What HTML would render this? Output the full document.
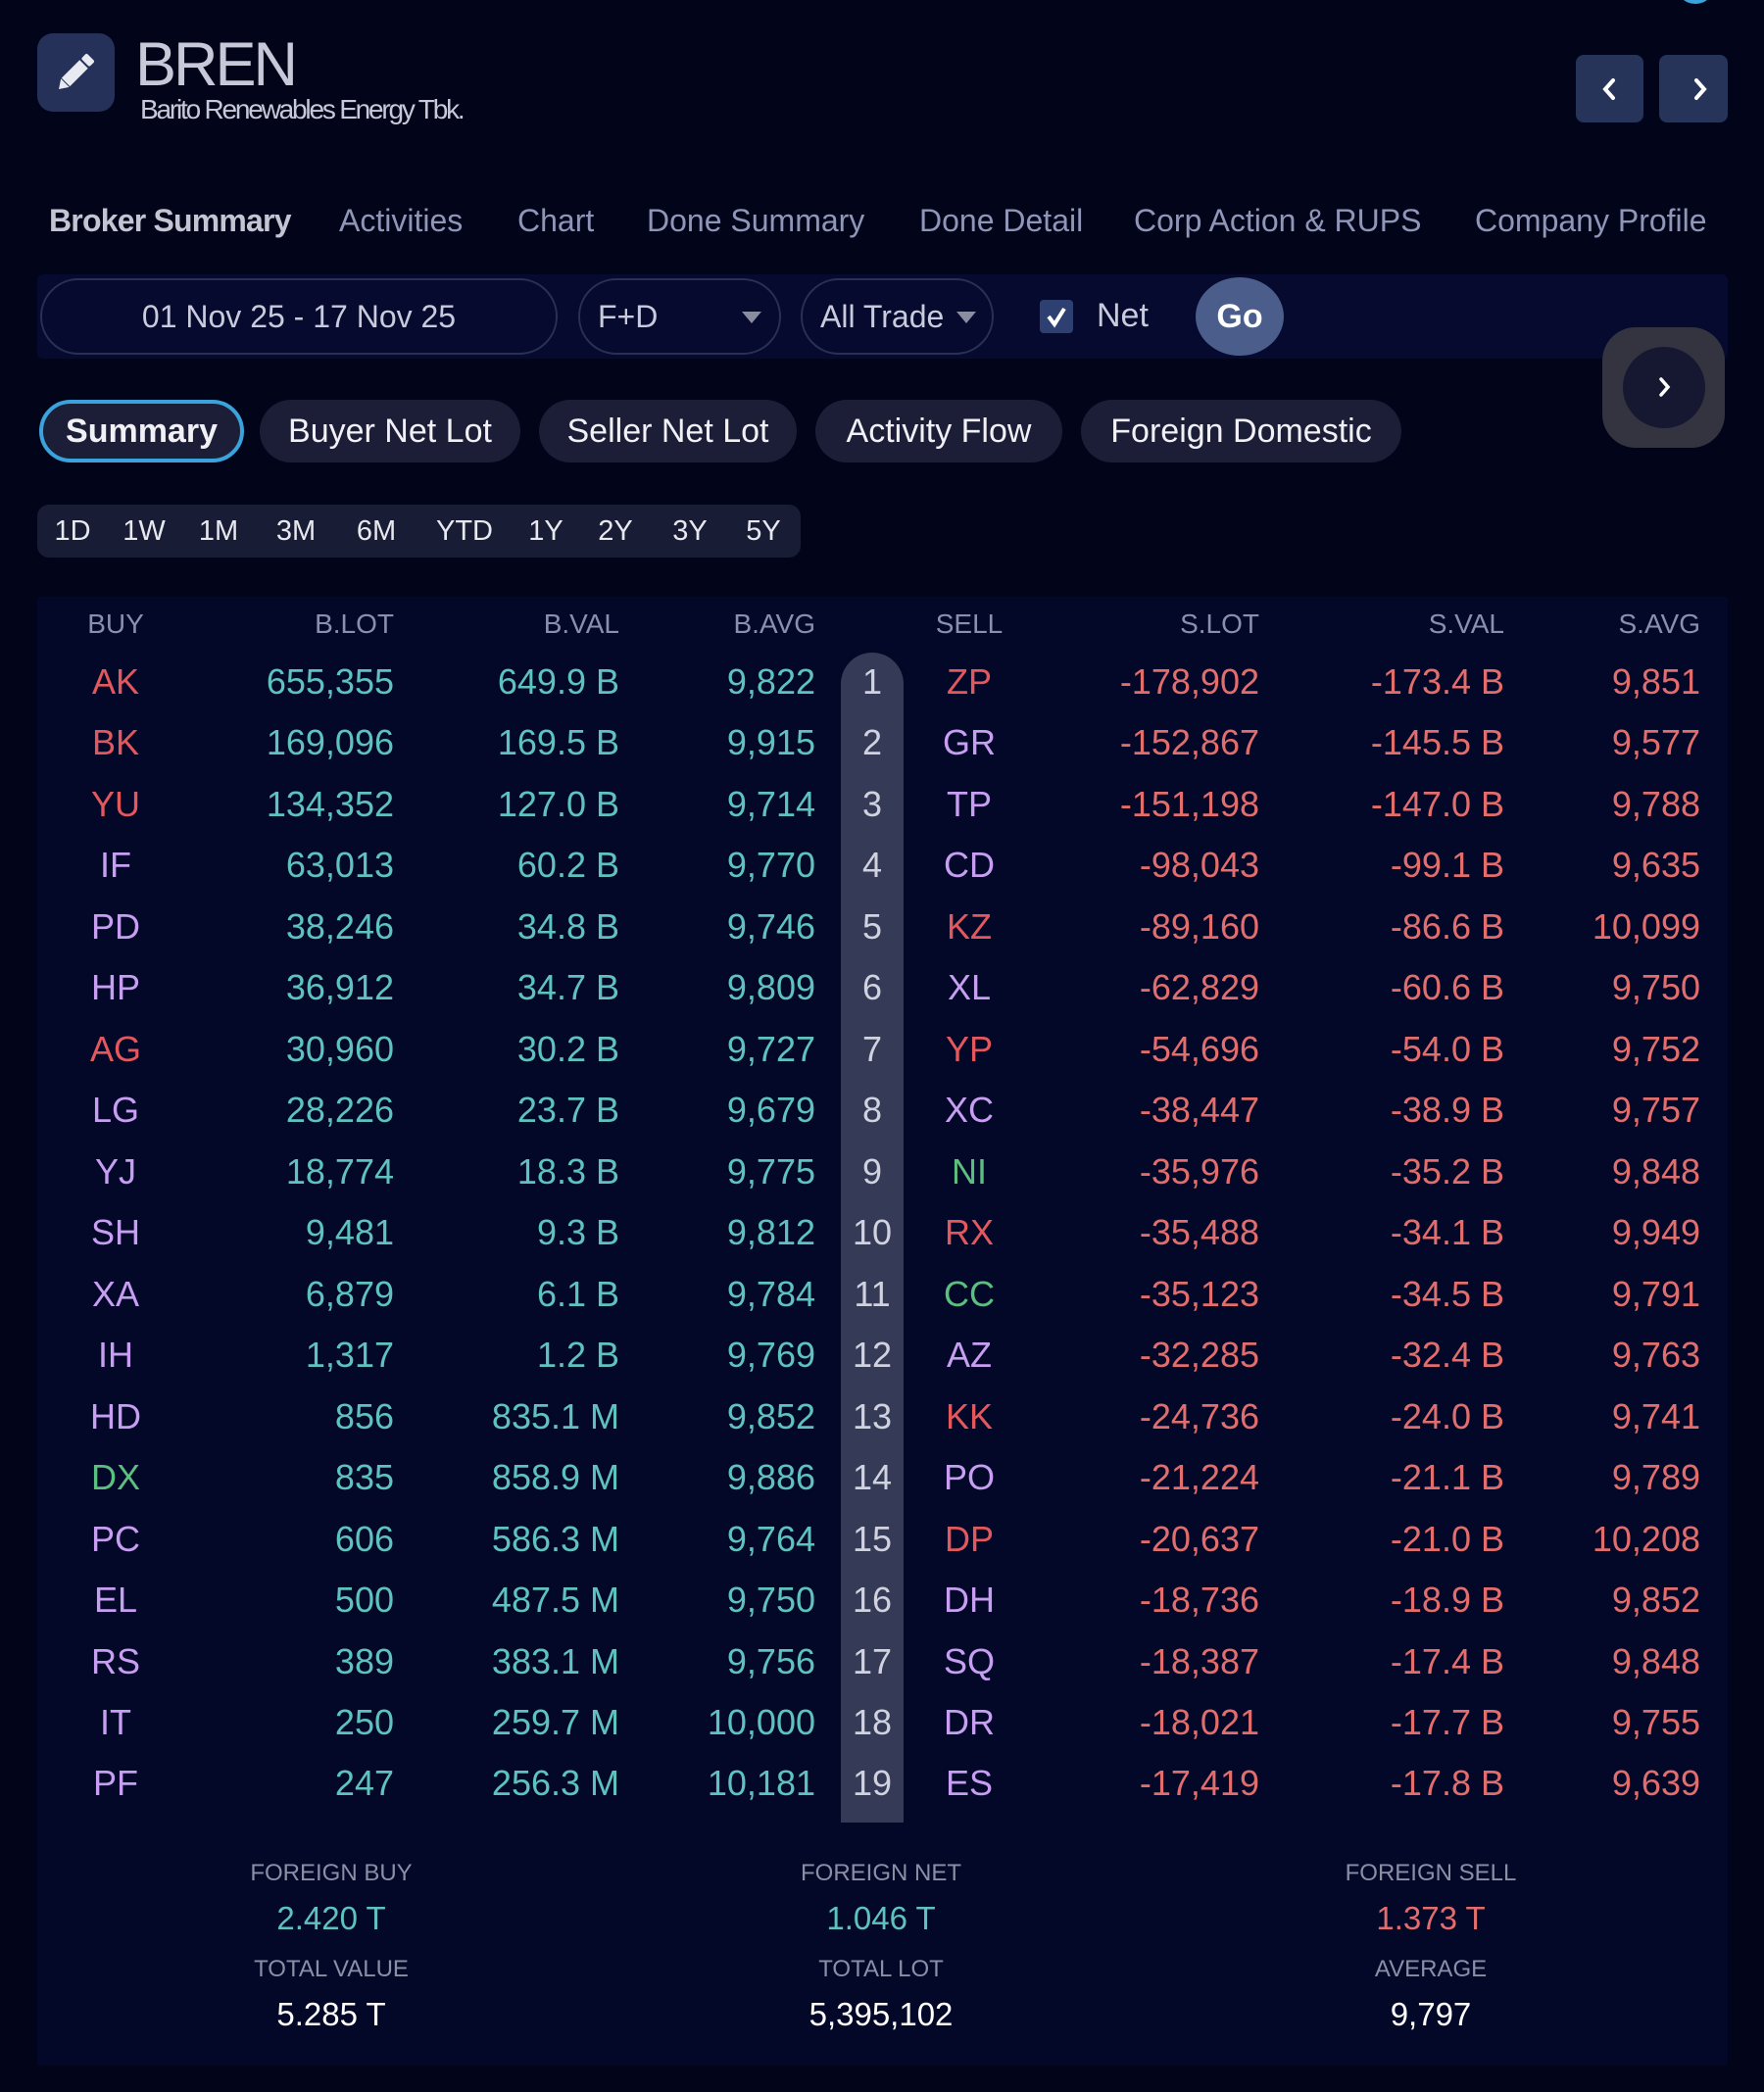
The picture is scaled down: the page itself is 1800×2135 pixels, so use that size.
<!DOCTYPE html>
<html><head><meta charset="utf-8"><style>
*{margin:0;padding:0;box-sizing:border-box}
body{width:1800px;height:2135px;background:#02041a;font-family:"Liberation Sans",sans-serif;position:relative;overflow:hidden;color:#c8c9d8}
.abs{position:absolute}
.tab{position:absolute;top:207px;font-size:32px;color:#9096b8;white-space:nowrap}
.pill{position:absolute;top:408px;height:64px;border-radius:32px;background:#1b1e36;color:#f0f0f5;font-size:34px;line-height:64px;text-align:center;white-space:nowrap}
.per{position:absolute;top:515px;height:54px;line-height:54px;font-size:29px;color:#e8e8f0;transform:translateX(-50%)}
.hd{position:absolute;top:620px;font-size:28px;color:#8a8fad;line-height:34px}
.row{position:absolute;left:0;width:1800px;height:62px;line-height:62px;font-size:36px}
.row div{position:absolute;top:0;white-space:nowrap}
.a{left:58px;width:120px;text-align:center}
.b{right:1398px;color:#5ec3bf}.c{right:1168px;color:#5ec3bf}.d{right:968px;color:#5ec3bf}
.n{left:858px;width:64px;text-align:center;color:#d0d2e0}
.s{left:929px;width:120px;text-align:center}
.e{right:515px;color:#e26d6d}.f{right:265px;color:#e26d6d}.g{right:65px;color:#e26d6d}
.R{color:#e2585d}.P{color:#c79ef2}.G{color:#5bbf80}
.ft{position:absolute;width:400px;text-align:center;transform:translateX(-50%)}
.lb{font-size:24px;color:#8a8fa6}
.vl{font-size:33px}
</style></head><body>
<div class="abs" style="left:1710px;top:-36px;width:40px;height:40px;border-radius:50%;background:#3aa3dc"></div>
<!-- header -->
<div class="abs" style="left:38px;top:34px;width:79px;height:80px;border-radius:16px;background:#253158"></div>
<svg class="abs" style="left:38px;top:34px" width="79" height="80" viewBox="0 0 79 80"><g transform="rotate(45 39 40)"><rect x="33" y="18" width="12" height="8" rx="2" fill="#e8eaf2"/><rect x="33" y="28" width="12" height="26" fill="#e8eaf2"/><path d="M33 55 L45 55 L39 64 Z" fill="#e8eaf2"/></g></svg>
<div class="abs" style="left:138px;top:30px;font-size:63px;color:#c7c9d9;letter-spacing:-3px">BREN</div>
<div class="abs" style="left:143px;top:96px;font-size:28px;color:#c7c9d9;letter-spacing:-2.2px">Barito Renewables Energy Tbk.</div>
<div class="abs" style="left:1608px;top:56px;width:69px;height:69px;border-radius:8px;background:#253458"></div>
<div class="abs" style="left:1693px;top:56px;width:70px;height:69px;border-radius:8px;background:#253458"></div>
<svg class="abs" style="left:1608px;top:56px" width="160" height="69"><path d="M38 26 L30 35 L38 44" stroke="#fff" stroke-width="4" fill="none" stroke-linecap="round"/><path d="M123 26 L131 35 L123 44" stroke="#fff" stroke-width="4" fill="none" stroke-linecap="round"/></svg>
<!-- tabs -->
<div class="tab" style="left:50px;font-weight:bold;color:#c3c5d3;letter-spacing:-0.8px">Broker Summary</div>
<div class="tab" style="left:346px">Activities</div>
<div class="tab" style="left:528px">Chart</div>
<div class="tab" style="left:660px">Done Summary</div>
<div class="tab" style="left:938px">Done Detail</div>
<div class="tab" style="left:1157px">Corp Action &amp; RUPS</div>
<div class="tab" style="left:1505px">Company Profile</div>
<!-- filter bar -->
<div class="abs" style="left:38px;top:280px;width:1725px;height:86px;background:#050a2e;border-radius:6px"></div>
<div class="abs" style="left:41px;top:284px;width:528px;height:78px;border:2px solid #2a2f55;border-radius:39px;font-size:32px;line-height:74px;text-align:center;color:#c9cbdc">01 Nov 25 - 17 Nov 25</div>
<div class="abs" style="left:590px;top:284px;width:207px;height:78px;border:2px solid #2a2f55;border-radius:39px;font-size:32px;line-height:74px;padding-left:18px;color:#c9cbdc">F+D</div>
<div class="abs" style="left:757px;top:318px;width:0;height:0;border-left:10px solid transparent;border-right:10px solid transparent;border-top:12px solid #8a8ca0"></div>
<div class="abs" style="left:817px;top:284px;width:197px;height:78px;border:2px solid #2a2f55;border-radius:39px;font-size:32px;line-height:74px;padding-left:18px;color:#c9cbdc">All Trade</div>
<div class="abs" style="left:976px;top:318px;width:0;height:0;border-left:10px solid transparent;border-right:10px solid transparent;border-top:12px solid #8a8ca0"></div>
<div class="abs" style="left:1061px;top:306px;width:34px;height:34px;border-radius:4px;background:#2e4072"></div>
<svg class="abs" style="left:1061px;top:306px" width="34" height="34"><path d="M9 17 L15 25 L25 9" stroke="#fff" stroke-width="4" fill="none"/></svg>
<div class="abs" style="left:1119px;top:303px;font-size:34px;color:#c9cbdc">Net</div>
<div class="abs" style="left:1220px;top:283px;width:90px;height:80px;border-radius:45px/40px;background:#4b5d8a;font-size:34px;font-weight:bold;line-height:80px;text-align:center;color:#fff">Go</div>
<!-- floating -->
<div class="abs" style="left:1635px;top:334px;width:125px;height:123px;border-radius:34px;background:#33343f"></div>
<div class="abs" style="left:1656px;top:354px;width:84px;height:83px;border-radius:50%;background:#161832"></div>
<svg class="abs" style="left:1656px;top:354px" width="84" height="83"><path d="M39 33 L46 41 L39 49" stroke="#fff" stroke-width="3.5" fill="none" stroke-linecap="round"/></svg>
<!-- pills -->
<div class="pill" style="left:40px;width:209px;border:4px solid #3aa3dc;line-height:56px;font-weight:bold">Summary</div>
<div class="pill" style="left:265px;width:266px">Buyer Net Lot</div>
<div class="pill" style="left:550px;width:263px">Seller Net Lot</div>
<div class="pill" style="left:832px;width:252px">Activity Flow</div>
<div class="pill" style="left:1103px;width:327px">Foreign Domestic</div>
<!-- period -->
<div class="abs" style="left:38px;top:515px;width:779px;height:54px;border-radius:12px;background:#191c35"></div>
<div class="per" style="left:74px">1D</div><div class="per" style="left:147px">1W</div><div class="per" style="left:223px">1M</div><div class="per" style="left:302px">3M</div><div class="per" style="left:384px">6M</div><div class="per" style="left:474px">YTD</div><div class="per" style="left:557px">1Y</div><div class="per" style="left:628px">2Y</div><div class="per" style="left:704px">3Y</div><div class="per" style="left:779px">5Y</div>
<!-- table panel -->
<div class="abs" style="left:38px;top:609px;width:1725px;height:1499px;background:#040828;border-radius:4px"></div>
<div class="abs" style="left:858px;top:666px;width:64px;height:1194px;background:#353a56;border-radius:32px 32px 0 0"></div>
<div class="hd" style="left:58px;width:120px;text-align:center">BUY</div>
<div class="hd" style="right:1398px">B.LOT</div>
<div class="hd" style="right:1168px">B.VAL</div>
<div class="hd" style="right:968px">B.AVG</div>
<div class="hd" style="left:929px;width:120px;text-align:center">SELL</div>
<div class="hd" style="right:515px">S.LOT</div>
<div class="hd" style="right:265px">S.VAL</div>
<div class="hd" style="right:65px">S.AVG</div>

<div class="row" style="top:665px"><div class="a R">AK</div><div class="b">655,355</div><div class="c">649.9 B</div><div class="d">9,822</div><div class="n">1</div><div class="s R">ZP</div><div class="e">-178,902</div><div class="f">-173.4 B</div><div class="g">9,851</div></div>
<div class="row" style="top:727px"><div class="a R">BK</div><div class="b">169,096</div><div class="c">169.5 B</div><div class="d">9,915</div><div class="n">2</div><div class="s P">GR</div><div class="e">-152,867</div><div class="f">-145.5 B</div><div class="g">9,577</div></div>
<div class="row" style="top:790px"><div class="a R">YU</div><div class="b">134,352</div><div class="c">127.0 B</div><div class="d">9,714</div><div class="n">3</div><div class="s P">TP</div><div class="e">-151,198</div><div class="f">-147.0 B</div><div class="g">9,788</div></div>
<div class="row" style="top:852px"><div class="a P">IF</div><div class="b">63,013</div><div class="c">60.2 B</div><div class="d">9,770</div><div class="n">4</div><div class="s P">CD</div><div class="e">-98,043</div><div class="f">-99.1 B</div><div class="g">9,635</div></div>
<div class="row" style="top:915px"><div class="a P">PD</div><div class="b">38,246</div><div class="c">34.8 B</div><div class="d">9,746</div><div class="n">5</div><div class="s R">KZ</div><div class="e">-89,160</div><div class="f">-86.6 B</div><div class="g">10,099</div></div>
<div class="row" style="top:977px"><div class="a P">HP</div><div class="b">36,912</div><div class="c">34.7 B</div><div class="d">9,809</div><div class="n">6</div><div class="s P">XL</div><div class="e">-62,829</div><div class="f">-60.6 B</div><div class="g">9,750</div></div>
<div class="row" style="top:1040px"><div class="a R">AG</div><div class="b">30,960</div><div class="c">30.2 B</div><div class="d">9,727</div><div class="n">7</div><div class="s R">YP</div><div class="e">-54,696</div><div class="f">-54.0 B</div><div class="g">9,752</div></div>
<div class="row" style="top:1102px"><div class="a P">LG</div><div class="b">28,226</div><div class="c">23.7 B</div><div class="d">9,679</div><div class="n">8</div><div class="s P">XC</div><div class="e">-38,447</div><div class="f">-38.9 B</div><div class="g">9,757</div></div>
<div class="row" style="top:1165px"><div class="a P">YJ</div><div class="b">18,774</div><div class="c">18.3 B</div><div class="d">9,775</div><div class="n">9</div><div class="s G">NI</div><div class="e">-35,976</div><div class="f">-35.2 B</div><div class="g">9,848</div></div>
<div class="row" style="top:1227px"><div class="a P">SH</div><div class="b">9,481</div><div class="c">9.3 B</div><div class="d">9,812</div><div class="n">10</div><div class="s R">RX</div><div class="e">-35,488</div><div class="f">-34.1 B</div><div class="g">9,949</div></div>
<div class="row" style="top:1290px"><div class="a P">XA</div><div class="b">6,879</div><div class="c">6.1 B</div><div class="d">9,784</div><div class="n">11</div><div class="s G">CC</div><div class="e">-35,123</div><div class="f">-34.5 B</div><div class="g">9,791</div></div>
<div class="row" style="top:1352px"><div class="a P">IH</div><div class="b">1,317</div><div class="c">1.2 B</div><div class="d">9,769</div><div class="n">12</div><div class="s P">AZ</div><div class="e">-32,285</div><div class="f">-32.4 B</div><div class="g">9,763</div></div>
<div class="row" style="top:1415px"><div class="a P">HD</div><div class="b">856</div><div class="c">835.1 M</div><div class="d">9,852</div><div class="n">13</div><div class="s R">KK</div><div class="e">-24,736</div><div class="f">-24.0 B</div><div class="g">9,741</div></div>
<div class="row" style="top:1477px"><div class="a G">DX</div><div class="b">835</div><div class="c">858.9 M</div><div class="d">9,886</div><div class="n">14</div><div class="s P">PO</div><div class="e">-21,224</div><div class="f">-21.1 B</div><div class="g">9,789</div></div>
<div class="row" style="top:1540px"><div class="a P">PC</div><div class="b">606</div><div class="c">586.3 M</div><div class="d">9,764</div><div class="n">15</div><div class="s R">DP</div><div class="e">-20,637</div><div class="f">-21.0 B</div><div class="g">10,208</div></div>
<div class="row" style="top:1602px"><div class="a P">EL</div><div class="b">500</div><div class="c">487.5 M</div><div class="d">9,750</div><div class="n">16</div><div class="s P">DH</div><div class="e">-18,736</div><div class="f">-18.9 B</div><div class="g">9,852</div></div>
<div class="row" style="top:1665px"><div class="a P">RS</div><div class="b">389</div><div class="c">383.1 M</div><div class="d">9,756</div><div class="n">17</div><div class="s P">SQ</div><div class="e">-18,387</div><div class="f">-17.4 B</div><div class="g">9,848</div></div>
<div class="row" style="top:1727px"><div class="a P">IT</div><div class="b">250</div><div class="c">259.7 M</div><div class="d">10,000</div><div class="n">18</div><div class="s P">DR</div><div class="e">-18,021</div><div class="f">-17.7 B</div><div class="g">9,755</div></div>
<div class="row" style="top:1789px"><div class="a P">PF</div><div class="b">247</div><div class="c">256.3 M</div><div class="d">10,181</div><div class="n">19</div><div class="s P">ES</div><div class="e">-17,419</div><div class="f">-17.8 B</div><div class="g">9,639</div></div>
<!-- footer -->
<div class="ft lb" style="left:338px;top:1898px">FOREIGN BUY</div>
<div class="ft lb" style="left:899px;top:1898px">FOREIGN NET</div>
<div class="ft lb" style="left:1460px;top:1898px">FOREIGN SELL</div>
<div class="ft vl" style="left:338px;top:1939px;color:#5ec3bf">2.420 T</div>
<div class="ft vl" style="left:899px;top:1939px;color:#5ec3bf">1.046 T</div>
<div class="ft vl" style="left:1460px;top:1939px;color:#e26d6d">1.373 T</div>
<div class="ft lb" style="left:338px;top:1996px">TOTAL VALUE</div>
<div class="ft lb" style="left:899px;top:1996px">TOTAL LOT</div>
<div class="ft lb" style="left:1460px;top:1996px">AVERAGE</div>
<div class="ft vl" style="left:338px;top:2037px;color:#fff">5.285 T</div>
<div class="ft vl" style="left:899px;top:2037px;color:#fff">5,395,102</div>
<div class="ft vl" style="left:1460px;top:2037px;color:#fff">9,797</div>
</body></html>
